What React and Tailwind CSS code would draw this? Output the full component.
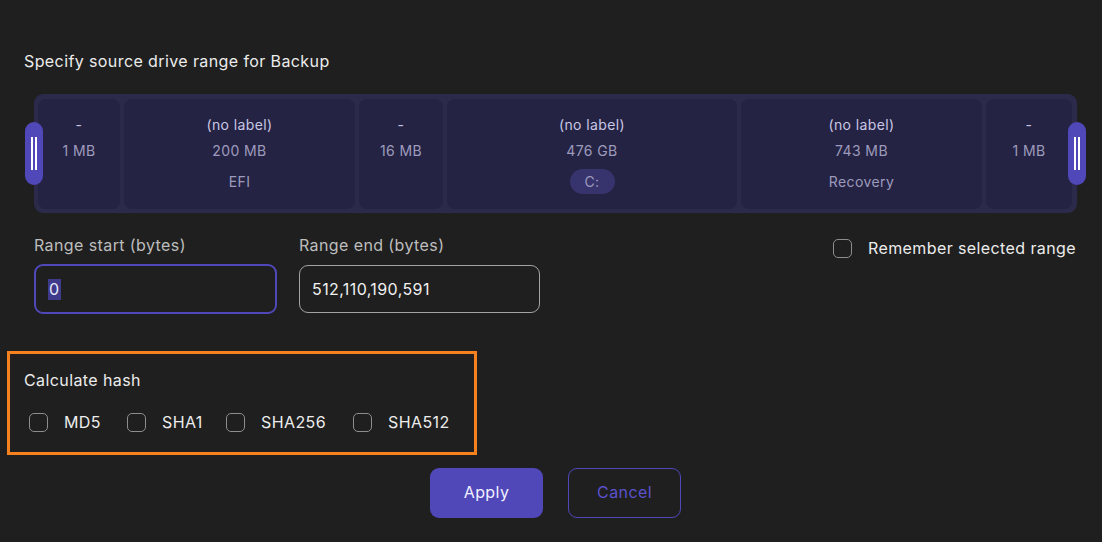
import React from "react";

const segs = [
  { w: 82, l1: "-", l2: "1 MB" },
  { w: 231, l1: "(no label)", l2: "200 MB", l3: "EFI" },
  { w: 84, l1: "-", l2: "16 MB" },
  { w: 290, l1: "(no label)", l2: "476 GB", pill: "C:" },
  { w: 241, l1: "(no label)", l2: "743 MB", l3: "Recovery" },
  { w: 86, l1: "-", l2: "1 MB" },
];

function Handle({ side }) {
  return (
    <div
      className={`absolute top-[28px] ${side === "left" ? "left-[-9px]" : "right-[-9px]"} w-[18px] h-[63px] rounded-full bg-[#5047b9] flex items-center justify-center gap-[2px]`}
    >
      <div className="w-[2px] h-[33px] bg-white" />
      <div className="w-[2px] h-[33px] bg-white" />
    </div>
  );
}

function Box() {
  return <div className="w-[19px] h-[19px] rounded-[5px] border-[1.5px] border-[#8d8d8d] shrink-0" />;
}

export default function App() {
  return (
    <div
      className="w-[1102px] h-[542px] bg-[#1f1f1f] text-[#e6e6e6] overflow-hidden tracking-[0.4px]"
      style={{ fontFamily: "Inter, 'Noto Sans', sans-serif" }}
    >
      <div className="pl-6 pt-[50px] text-[16px] leading-[22px] text-[#ececec]">
        Specify source drive range for Backup
      </div>
      <div className="pl-[34px] pt-[22px]">
        <div className="relative w-[1043px] h-[119px] rounded-[9px] bg-[#2c2a4b] p-1 pt-[5px] flex gap-1">
          {segs.map((s, i) => (
            <div
              key={i}
              style={{ width: s.w }}
              className="h-[110px] rounded-[8px] bg-[#252343] flex flex-col items-center pt-4 text-[14px]"
            >
              <div className="h-5 leading-5 text-[#c9c7e6]">{s.l1}</div>
              <div className="h-5 leading-5 mt-[6px] text-[#9d9bbd]">{s.l2}</div>
              {s.l3 && (
                <div className="h-[25px] leading-[25px] mt-[8px] text-[#9d9bbd]">{s.l3}</div>
              )}
              {s.pill && (
                <div className="h-[25px] leading-[25px] mt-[8px] w-[45px] rounded-full bg-[#37336c] text-center text-[#9d9bbd]">
                  {s.pill}
                </div>
              )}
            </div>
          ))}
          <Handle side="left" />
          <Handle side="right" />
        </div>
      </div>

      <div className="flex items-start justify-between pl-[34px] pr-[26px] pt-[21px]">
        <div className="flex gap-[22px]">
          <div className="flex flex-col">
            <div className="text-[16px] leading-[22px] text-[#bdbdbd]">Range start (bytes)</div>
            <div className="mt-[8px] w-[243px] h-[50px] rounded-[9px] border-2 border-[#5047b9] flex items-center pl-[12px] text-[16px]">
              <span className="bg-[#3f3a8a] text-[#e8e8ff] leading-[21px] px-[1px]">0</span>
            </div>
          </div>
          <div className="flex flex-col">
            <div className="text-[16px] leading-[22px] text-[#bdbdbd]">Range end (bytes)</div>
            <div className="mt-[9px] w-[241px] h-[48px] rounded-[9px] border border-[#a3a3a3] flex items-center pl-[12px] text-[16px] text-[#f0f0f0]">
              512,110,190,591
            </div>
          </div>
        </div>
        <div className="flex items-center gap-4 pt-[3px]">
          <Box />
          <span className="text-[16px] leading-[22px] text-[#ececec]">Remember selected range</span>
        </div>
      </div>

      <div className="pl-[7px] pt-[37px]">
        <div className="w-[470px] h-[104px] border-[3px] border-[#f5821f] pl-[14px] pt-[15px]">
          <div className="text-[16px] leading-[22px] text-[#ececec]">Calculate hash</div>
          <div className="flex items-center mt-[19px] ml-[5px] text-[16px] text-[#ececec]">
            <div className="flex items-center gap-4 w-[98px]">
              <Box />
              <span>MD5</span>
            </div>
            <div className="flex items-center gap-4 w-[99px]">
              <Box />
              <span>SHA1</span>
            </div>
            <div className="flex items-center gap-4 w-[127px]">
              <Box />
              <span>SHA256</span>
            </div>
            <div className="flex items-center gap-4">
              <Box />
              <span>SHA512</span>
            </div>
          </div>
        </div>
      </div>

      <div className="flex justify-center gap-[25px] pl-[9px] pt-[13px]">
        <button className="w-[113px] h-[50px] rounded-[9px] bg-[#5047b9] text-[16px] leading-[20px] text-[#f2f2ff] pb-[2px]">
          Apply
        </button>
        <button className="w-[113px] h-[50px] rounded-[9px] border border-[#5047b9] text-[16px] leading-[20px] text-[#5b52cc] pb-[2px]">
          Cancel
        </button>
      </div>
    </div>
  );
}
